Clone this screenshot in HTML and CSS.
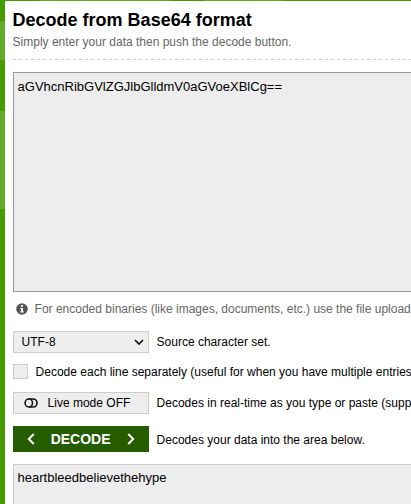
FILE: index.html
```
<!DOCTYPE html>
<html lang="en">
<head>
<meta charset="utf-8">
<title>Decode from Base64 format</title>
<link rel="stylesheet" href="styles.css">
</head>
<body>
<main class="panel">
  <header class="intro">
    <h1>Decode from Base64 format</h1>
    <p>Simply enter your data then push the decode button.</p>
  </header>
  <svg class="divider" width="600" height="1"><path d="M0 .5H600" stroke="#ccc" stroke-dasharray="3 3"/></svg>
  <div class="area input">aGVhcnRibGVlZGJlbGlldmV0aGVoeXBlCg==</div>
  <div class="note">
    <svg width="12" height="12" viewBox="0 0 12 12"><circle cx="6" cy="6" r="5.8" fill="#555"/><path d="M5 2h2v1.8H5zM4.3 5H7v3.2h.8v1.2H4.3V8.2H5V6.1h-.7z" fill="#fff"/></svg>
    <span>For encoded binaries (like images, documents, etc.) use the file upload</span>
  </div>
  <div class="row charset">
    <div class="control select"><span>UTF-8</span><svg width="10" height="6" viewBox="0 0 10 6"><path d="M1 1l4 4 4-4" fill="none" stroke="#111" stroke-width="1.7"/></svg></div>
    <span>Source character set.</span>
  </div>
  <div class="row lines"><span class="checkbox"></span><span>Decode each line separately (useful for when you have multiple entries</span></div>
  <div class="row live">
    <div class="control toggle"><svg width="14" height="10" viewBox="0 0 14 10"><path d="M5 1h4a4 4 0 0 1 0 8H5" fill="none" stroke="#111" stroke-width="1.6"/><ellipse cx="4.8" cy="5" rx="3.7" ry="4" fill="none" stroke="#111" stroke-width="1.6"/></svg><span>Live mode OFF</span></div>
    <span>Decodes in real-time as you type or paste (supp</span>
  </div>
  <div class="row action">
    <div class="decode"><svg width="8" height="12" viewBox="0 0 8 12"><path d="M6.8 1L1.8 6l5 5" fill="none" stroke="#fff" stroke-width="2"/></svg><b>DECODE</b><svg width="8" height="12" viewBox="0 0 8 12"><path d="M1.2 1l5 5-5 5" fill="none" stroke="#fff" stroke-width="2"/></svg></div>
    <span class="hint">Decodes your data into the area below.</span>
  </div>
  <div class="area output">heartbleedbelievethehype</div>
</main>
</body>
</html>
```
FILE: styles.css
```
* { box-sizing: border-box; }
html, body { height: 100%; overflow: hidden; }
body {
  margin: 0;
  padding: 1px 0 0 5px;
  font: 12px/16px "Liberation Sans", Arial, sans-serif;
  color: #000;
  background:
    linear-gradient(#60ab27, #60ab27) 0 21px / 5px 39px no-repeat,
    linear-gradient(#60ab27, #60ab27) 0 111px / 5px 98px no-repeat,
    linear-gradient(#60ab27, #60ab27) 40px 0 / 130px 1px no-repeat,
    linear-gradient(#60ab27, #60ab27) 204px 0 / 78px 1px no-repeat,
    #459b00;
}
.panel {
  height: 503px;
  padding: 7px 0 0 7.6px;
  background: #fff;
  overflow: hidden;
  white-space: nowrap;
}
h1 { margin: 0; font-size: 18px; line-height: 24px; color: #000; }
.intro p { margin: 2px 0 0; color: #666; }
.divider { display: block; margin-top: 9px; }
.area {
  width: 600px;
  padding: 6px 4px;
  border: 1px solid #999;
  background: #ededed;
  font-size: 13px;
}
.input { height: 220px; margin-top: 12px; }
.note { display: flex; align-items: center; height: 16px; margin-top: 9px; padding-left: 3px; gap: 7px; color: #666; }
.note svg, .control svg, .decode svg { flex: none; }
.row { display: flex; align-items: center; gap: 8px; }
.charset { margin-top: 14px; }
.control {
  display: flex;
  flex: none;
  align-items: center;
  width: 136px;
  height: 22px;
  border: 1px solid #ccc;
  background: #ededed;
}
.select { justify-content: space-between; padding: 0 4px 0 8px; }
.lines { height: 15px; margin-top: 11px; }
.checkbox { flex: none; width: 15px; height: 15px; border: 1px solid #ccc; background: #ededed; }
.live { margin-top: 13px; }
.toggle { padding-left: 10px; gap: 10px; }
.action { margin-top: 12px; }
.decode {
  display: flex;
  flex: none;
  align-items: center;
  justify-content: space-between;
  width: 136px;
  height: 26px;
  padding: 0 14px;
  background: #265c00;
  color: #fff;
  font-size: 14px;
}
.hint { padding-top: 2px; }
.output { height: 220px; margin-top: 12px; padding-top: 5px; border-color: #ccc; }
```
